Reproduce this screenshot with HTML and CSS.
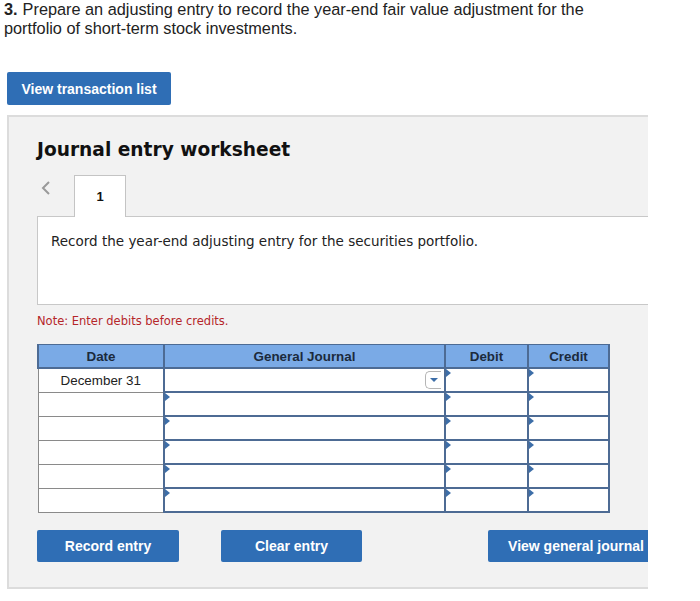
FILE: index.html
```html
<!DOCTYPE html>
<html>
<head>
<meta charset="utf-8">
<link rel="stylesheet" href="styles.css">
</head>
<body>
<p class="question"><b class="qnum">3.</b>Prepare an adjusting entry to record the year-end fair value adjustment for the portfolio of short-term stock investments.</p>
<button class="btn btn-list">View transaction list</button>
<div class="panel">
  <h2 class="ws-title">Journal entry worksheet</h2>
  <div class="tabs">
    <span class="prev">
      <svg width="12" height="16" viewBox="0 0 12 16"><path d="M9 2 L3 8 L9 14" fill="none" stroke="#9a9a9a" stroke-width="2"/></svg>
    </span>
    <span class="tab">1</span>
  </div>
  <div class="instr">Record the year-end adjusting entry for the securities portfolio.</div>
  <div class="note">Note: Enter debits before credits.</div>
  <table class="journal">
    <thead>
      <tr><th class="c-date">Date</th><th class="c-gj">General Journal</th><th class="c-dr">Debit</th><th class="c-cr">Credit</th></tr>
    </thead>
    <tbody>
      <tr class="first"><td class="date">December 31</td><td class="inp gj sel"><span class="dd"><svg width="10" height="6" viewBox="0 0 10 6"><path d="M1 1 L9 1 L5 5 Z" fill="#3d6ea8"/></svg></span></td><td class="inp mk"></td><td class="inp mk"></td></tr>
      <tr><td class="date"></td><td class="inp mk"></td><td class="inp mk"></td><td class="inp mk"></td></tr>
      <tr><td class="date"></td><td class="inp mk"></td><td class="inp mk"></td><td class="inp mk"></td></tr>
      <tr><td class="date"></td><td class="inp mk"></td><td class="inp mk"></td><td class="inp mk"></td></tr>
      <tr><td class="date"></td><td class="inp mk"></td><td class="inp mk"></td><td class="inp mk"></td></tr>
      <tr><td class="date"></td><td class="inp mk"></td><td class="inp mk"></td><td class="inp mk"></td></tr>
    </tbody>
  </table>
  <div class="actions">
    <button class="btn btn-rec">Record entry</button>
    <button class="btn btn-clr">Clear entry</button>
    <button class="btn btn-view">View general journal</button>
  </div>
</div>
</body>
</html>
```

FILE: styles.css
```css
html, body { margin: 0; padding: 0; background: #fff; }
body { padding-left: 4px; font-family: "Liberation Sans", Arial, sans-serif; color: #222; }
.question { margin: 0; padding-top: 0; font-size: 16.3px; line-height: 19px; width: 640px; color: #222; }
.qnum { font-weight: bold; margin-right: 5px; }
.btn {
  display: block; border: none; border-radius: 2px; background: #2f6eb5; color: #fff;
  font-family: "Liberation Sans", Arial, sans-serif; font-weight: bold; font-size: 14px;
  padding: 0; height: 33px; cursor: pointer; flex-shrink: 0;
}
.btn-list { margin: 34px 0 0 3px; width: 164px; }
.panel {
  margin: 10px 0 0 3px; width: 611px; height: 470px; overflow: hidden;
  background: #f2f2f2; border: 2px solid #dcdcdc; border-right: none;
  padding-left: 28px; position: relative;
}
.ws-title {
  margin: 20px 0 0 0; font-family: "DejaVu Sans", Verdana, sans-serif; font-weight: bold;
  font-size: 18.6px; line-height: 26px; color: #111;
}
.tabs { display: flex; align-items: flex-end; margin-top: 11px; height: 42px; }
.prev { width: 37px; display: flex; justify-content: flex-start; align-self: flex-start; padding: 6px 0 0 3px; box-sizing: border-box; }
.tab {
  width: 50px; height: 41px; background: #fff; border: 1px solid #c4c4c4; border-bottom: none;
  display: flex; align-items: center; justify-content: center; font-size: 13px; font-weight: bold; color: #111;
  position: relative; z-index: 1; margin-bottom: -1px; box-sizing: content-box;
}
.instr {
  height: 89px; background: #fff; border: 1px solid #c8c8c8; border-right: none;
  font-family: "DejaVu Sans", Verdana, sans-serif; font-size: 13.5px; color: #222;
  padding: 16px 0 0 13px; box-sizing: border-box; line-height: 17px; margin-right: -10px;
}
.note {
  margin-top: 9px; font-family: "DejaVu Sans", Verdana, sans-serif; font-size: 11.5px; color: #b5262a;
  line-height: 14px;
}
.journal {
  margin-top: 16px; border-collapse: collapse; table-layout: fixed; width: 571px;
  font-family: "Liberation Sans", Arial, sans-serif; font-size: 13.4px;
}
.journal th {
  background: #7aaae6; color: #1c2a3c; font-weight: bold; height: 22px; padding: 0;
  border: 2px solid #4d6b94; border-top: 1px solid #4d6b94;
}
.c-date { width: 124px; }
.c-gj { width: 279px; }
.c-dr { width: 81px; }
.c-cr { width: 79px; }
.journal td { height: 22px; padding: 0; background: #fff; position: relative; }
.journal td.date { border: 1px solid #8a8a8a; text-align: center; color: #222; }
.journal td.inp { border: 2px solid #4d6b94; }
.journal tr.first td.inp { border-top: 1px solid #4d6b94; }
.journal td.sel { border-top: 2px dotted #4d6b94 !important; }
.mk::before {
  content: ""; position: absolute; left: 0; top: 0; width: 0; height: 0;
  border-top: 4px solid transparent; border-bottom: 4px solid transparent; border-left: 5px solid #3d6ea8;
}
.dd {
  position: absolute; right: 3px; top: 2px; width: 16px; height: 18px; border: 1px solid #b5b5b5;
  border-right: none; border-radius: 5px 0 0 5px; display: flex; align-items: center; justify-content: center;
  box-sizing: border-box;
}
.actions { display: flex; margin-top: 17px; }
.btn-rec { width: 142px; height: 32px; }
.btn-clr { width: 141px; height: 32px; margin-left: 42px; }
.btn-view { width: 176px; height: 32px; margin-left: 126px; }
```
